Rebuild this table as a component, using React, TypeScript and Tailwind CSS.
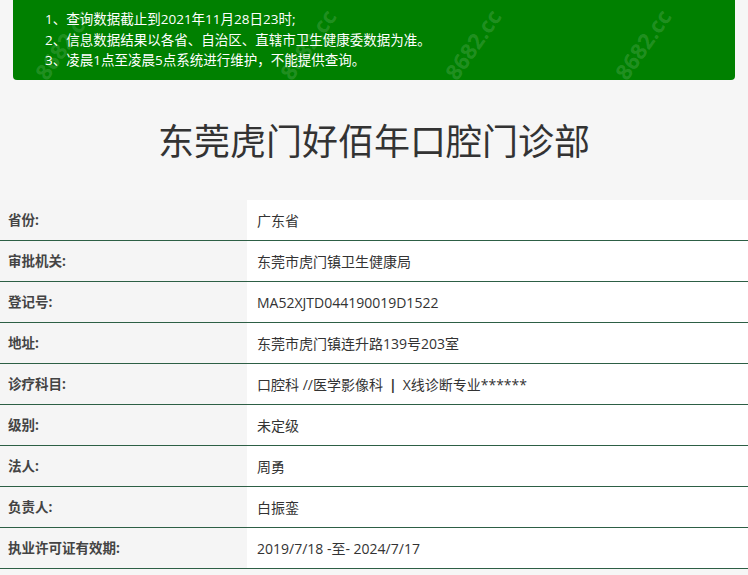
import React from "react"

/* ─── Data ──────────────────────────────────────────────────────────────── */

const notices = [
  "1、查询数据截止到2021年11月28日23时;",
  "2、信息数据结果以各省、自治区、直辖市卫生健康委数据为准。",
  "3、凌晨1点至凌晨5点系统进行维护，不能提供查询。",
]

const rows: { label: string; value: React.ReactNode }[] = [
  { label: "省份:", value: "广东省" },
  { label: "审批机关:", value: "东莞市虎门镇卫生健康局" },
  { label: "登记号:", value: "MA52XJTD044190019D1522" },
  { label: "地址:", value: "东莞市虎门镇连升路139号203室" },
  {
    label: "诊疗科目:",
    value: (
      <>
        口腔科 //医学影像科 <span className="mx-1.5 font-bold">|</span> X线诊断专业******
      </>
    ),
  },
  { label: "级别:", value: "未定级" },
  { label: "法人:", value: "周勇" },
  { label: "负责人:", value: "白振銮" },
  { label: "执业许可证有效期:", value: "2019/7/18 -至- 2024/7/17" },
]

// faint watermark stamps over the banner
const marks = [10, 255, 420, 590]

/* ─── Page ──────────────────────────────────────────────────────────────── */

export default function App() {
  return (
    <div
      className="min-h-[575px] bg-[#f6f6f6] text-[#333]"
      style={{ fontFamily: '"Open Sans", "Noto Sans CJK SC", sans-serif' }}
    >
      {/* Notice banner */}
      <div className="px-[13px]">
        <div className="relative h-[80px] overflow-hidden rounded-b-[4px] bg-[#008000] pl-[32px] pt-[9px] text-[13.5px] leading-[20.5px] text-white">
          {marks.map((x) => (
            <span
              key={x}
              aria-hidden
              className="pointer-events-none absolute top-[34px] -rotate-[55deg] select-none text-[22px] font-bold text-white/15"
              style={{ left: x }}
            >
              8682.cc
            </span>
          ))}
          <div className="relative">
            {notices.map((n) => (
              <div key={n}>{n}</div>
            ))}
          </div>
        </div>
      </div>

      {/* Title */}
      <h1 className="pt-[38px] pb-[34px] text-center text-[36px] leading-[48px] font-normal text-[#333]">
        东莞虎门好佰年口腔门诊部
      </h1>

      {/* Info table */}
      <div>
        {rows.map((r) => (
          <div key={r.label} className="flex h-[41px] border-b border-[#2d5f45]">
            <div className="flex w-[247px] items-center bg-[#f5f5f5] pl-[8px] text-[13.5px] font-bold text-[#444]">
              {r.label}
            </div>
            <div className="flex flex-1 items-center bg-white pl-[10px] text-[14px] text-[#333]">
              {r.value}
            </div>
          </div>
        ))}
      </div>
    </div>
  )
}
